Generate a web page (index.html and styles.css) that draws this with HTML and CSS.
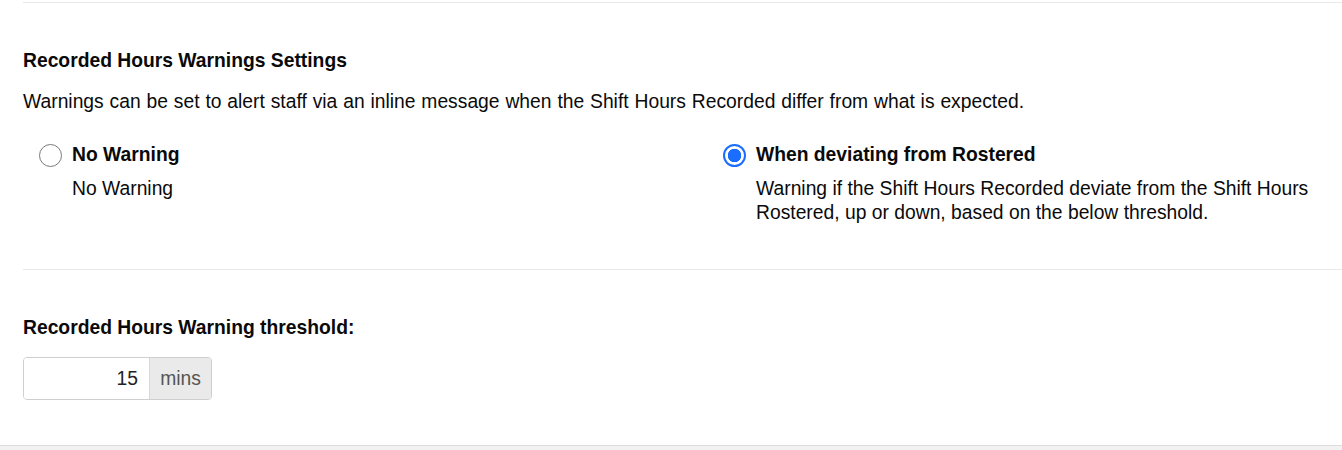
FILE: index.html
```html
<!DOCTYPE html>
<html lang="en">
<head>
    <meta charset="UTF-8">
    <meta name="viewport" content="width=device-width, initial-scale=1.0">
    <title>Recorded Hours Warnings</title>
    <link rel="stylesheet" href="styles.css">
</head>
<body>
    <div class="panel">
        <section class="section">
            <h3 class="section-title">Recorded Hours Warnings Settings</h3>
            <p class="section-desc">Warnings can be set to alert staff via an inline message when the Shift Hours Recorded differ from what is expected.</p>

            <div class="options">
                <label class="option">
                    <span class="radio"></span>
                    <span class="option-body">
                        <span class="option-title">No Warning</span>
                        <span class="option-desc">No Warning</span>
                    </span>
                </label>
                <label class="option">
                    <span class="radio checked"></span>
                    <span class="option-body">
                        <span class="option-title">When deviating from Rostered</span>
                        <span class="option-desc">Warning if the Shift Hours Recorded deviate from the Shift Hours Rostered, up or down, based on the below threshold.</span>
                    </span>
                </label>
            </div>
        </section>

        <section class="section threshold">
            <div class="field-label">Recorded Hours Warning threshold:</div>
            <div class="input-group">
                <input class="input" type="text" value="15">
                <span class="addon">mins</span>
            </div>
        </section>
    </div>
    <div class="footer"></div>
</body>
</html>
```

FILE: styles.css
```css
body {
    margin: 0;
    font-family: "Liberation Sans", Arial, sans-serif;
    font-size: 19.3px;
    line-height: 24px;
    color: #0a0a0a;
    background: #fff;
}
.panel {
    margin: 2px 0 0 23px;
}
.section {
    border-top: 1px solid #e8e8e8;
    padding: 46px 0 44px;
}
.section-title {
    margin: 0;
    font-size: 19.3px;
    font-weight: bold;
    line-height: 24px;
}
.section-desc {
    margin: 17px 0 0;
    word-spacing: 0.5px;
}
.options {
    display: grid;
    grid-template-columns: 684px 1fr;
    margin-top: 29px;
    padding-left: 16px;
}
.option {
    display: flex;
    gap: 10px;
    padding-right: 12px;
}
.radio {
    flex: none;
    box-sizing: border-box;
    width: 23px;
    height: 23px;
    margin-top: 1px;
    border: 1.5px solid #7a7a7a;
    border-radius: 50%;
    background: #fff;
}
.radio.checked {
    border: 2.5px solid #1a6dff;
    background: radial-gradient(circle, #1a6dff 0 6.5px, #fff 7px);
}
.option-body {
    display: flex;
    flex-direction: column;
    gap: 10px;
}
.option-title {
    font-weight: bold;
}
.threshold {
    padding: 46px 0 45px;
}
.field-label {
    font-weight: bold;
}
.input-group {
    display: flex;
    width: 189px;
    height: 43px;
    margin-top: 17px;
    box-sizing: border-box;
    border: 1px solid #cfcfcf;
    border-radius: 4px;
    overflow: hidden;
}
.input {
    width: 125px;
    box-sizing: border-box;
    border: none;
    padding: 0 11px;
    font: inherit;
    color: #222;
    text-align: right;
    outline: none;
}
.addon {
    flex: 1;
    display: flex;
    align-items: center;
    justify-content: center;
    border-left: 1px solid #d8d8d8;
    background: #eaeaea;
    color: #555;
}
.footer {
    border-top: 1px solid #dcdcdc;
    background: #f2f2f2;
    height: 10px;
}
```
